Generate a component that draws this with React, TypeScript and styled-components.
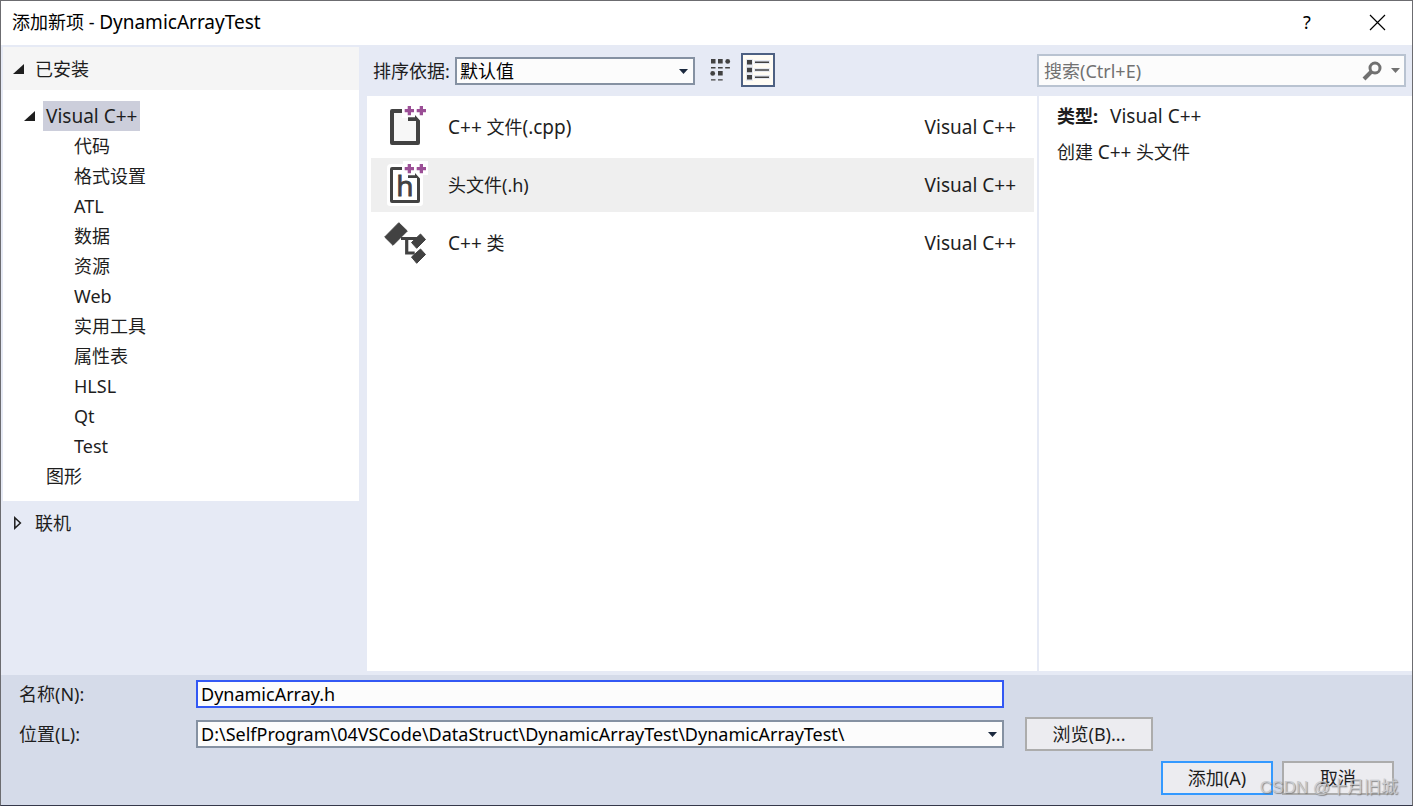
import React from 'react';
import styled, { createGlobalStyle } from 'styled-components';

const GlobalStyle = createGlobalStyle`
  *, *::before, *::after { box-sizing: border-box; }
  body {
    margin: 0;
    color: #1e1e1e;
    font: 18px/28px "Noto Sans", "Noto Sans CJK SC", sans-serif;
  }
  button, input, select { font: inherit; color: inherit; margin: 0; border-radius: 0; }
  button { padding: 0; border: 0; background: none; }
  ul { list-style: none; margin: 0; padding: 0; }
  svg { display: block; flex: none; }
`;

const Dialog = styled.div`
  position: relative;
  display: flex;
  flex-direction: column;
  min-height: 100vh;
  border: 1px solid #6c6c70;
  border-bottom-color: #35384a;
  background: #e6eaf5;
`;

const TitleBar = styled.header`
  display: flex;
  align-items: center;
  height: 44px;
  padding: 0 10px 2px 11px;
  background: #fff;
  color: #000;
`;

const Title = styled.h1`
  flex: 1;
  margin: 0;
  font-size: 18px;
  font-weight: 400;
`;

const Latin = styled.span`
  font-size: 19px;
`;

const CaptionButton = styled.button`
  display: flex;
  align-items: center;
  justify-content: center;
  width: 50px;
  height: 42px;
  & + & { margin-left: 20px; }
`;

const Body = styled.main`
  flex: 1;
  display: grid;
  grid-template-columns: 356px minmax(0, 1fr);
  column-gap: 8px;
  padding: 0 0 4px 2px;
`;

const Sidebar = styled.nav`
  padding-top: 2px;
`;

const SectionHeader = styled.button<{ $open?: boolean }>`
  display: flex;
  align-items: center;
  gap: 11px;
  width: 100%;
  height: 43px;
  padding-left: 10px;
  text-align: left;
  background: ${(p) => (p.$open ? '#f5f5f5' : 'transparent')};
`;

const Tree = styled.ul`
  padding: 11px 0 10px 21px;
  background: #fff;
`;

const TreeRow = styled.li<{ $depth: number }>`
  display: flex;
  align-items: center;
  gap: 8px;
  height: 30px;
  padding-left: ${(p) => p.$depth}px;
`;

const TreeButton = styled.button<{ $selected?: boolean }>`
  height: 30px;
  padding: 0 3px;
  background: ${(p) => (p.$selected ? '#cccedb' : 'transparent')};
`;

const Content = styled.section`
  display: flex;
  flex-direction: column;
  min-width: 0;
`;

const Toolbar = styled.div`
  display: flex;
  align-items: center;
  height: 51px;
  padding: 0 6px;
`;

const SortLabel = styled.label`
  width: 82px;
  white-space: nowrap;
`;

const ComboWrap = styled.div<{ $width: string }>`
  position: relative;
  width: ${(p) => p.$width};
`;

const Combo = styled.select`
  display: block;
  width: 100%;
  height: 28px;
  padding: 0 24px 0 3px;
  border: 2px solid #8591a2;
  background: #fcfcfc;
  color: #000;
  line-height: 24px;
  appearance: none;
  outline: none;
`;

const ComboArrow = styled.svg`
  position: absolute;
  right: 7px;
  top: 12px;
  pointer-events: none;
`;

const ViewButtons = styled.div`
  display: flex;
  gap: 4px;
  height: 35px;
  margin-left: 8px;
`;

const ViewButton = styled.button<{ $active?: boolean }>`
  display: flex;
  align-items: center;
  justify-content: center;
  width: 34px;
  height: 34px;
  border: 2px solid ${(p) => (p.$active ? '#4d6082' : 'transparent')};
  background: ${(p) => (p.$active ? '#fffcf4' : 'transparent')};
`;

const SearchBox = styled.div`
  display: flex;
  align-items: center;
  width: 369px;
  height: 33px;
  margin-left: auto;
  padding-right: 4px;
  border: 2px solid #b9c3d1;
  background: #fcfcfc;
`;

const SearchInput = styled.input`
  flex: 1;
  min-width: 0;
  height: 29px;
  padding: 0 5px;
  border: 0;
  background: none;
  outline: none;
  &::placeholder { color: #717171; opacity: 1; }
`;

const SearchButton = styled.button`
  padding: 0 0 0 8px;
`;

const Panels = styled.div`
  flex: 1;
  display: grid;
  grid-template-columns: minmax(0, 1fr) 373px;
  column-gap: 2px;
`;

const TemplateList = styled.ul`
  display: flex;
  flex-direction: column;
  gap: 4px;
  padding: 4px 3px 4px 4px;
  background: #fff;
`;

const TemplateItem = styled.button<{ $selected?: boolean }>`
  display: flex;
  align-items: center;
  gap: 20px;
  width: 100%;
  height: 54px;
  padding: 0 18px 0 13px;
  text-align: left;
  background: ${(p) => (p.$selected ? '#efefef' : 'transparent')};
`;

const TemplateName = styled.span`
  flex: 1;
`;

const Details = styled.aside`
  display: flex;
  flex-direction: column;
  gap: 8px;
  padding: 6px 18px;
  background: #fff;
`;

const DetailLine = styled.p`
  height: 28px;
  margin: 0;
`;

const DetailKey = styled.b`
  margin-right: 12px;
`;

const Footer = styled.footer`
  padding: 5px 18px 10px;
  background: #d5dbe9;
`;

const Fields = styled.div`
  display: grid;
  grid-template-columns: 177px minmax(0, 1fr) 128px;
  grid-template-rows: 28px 34px;
  row-gap: 9px;
  align-items: center;
  padding-right: 241px;
`;

const NameInput = styled.input`
  display: block;
  width: 100%;
  height: 28px;
  padding: 0 3px;
  border: 2px solid #3358f4;
  background: #fcfcfc;
  color: #000;
  outline: none;
`;

const PushButton = styled.button<{ $primary?: boolean }>`
  width: 112px;
  height: 34px;
  border: 2px solid ${(p) => (p.$primary ? '#3399ff' : '#acacac')};
  background: #ececf0;
`;

const BrowseButton = styled(PushButton)`
  grid-column: 3;
  width: 128px;
`;

const Field = styled.div`
  padding-right: 21px;
`;

const Actions = styled.div`
  display: flex;
  justify-content: flex-end;
  gap: 9px;
  margin-top: 10px;
`;

const Watermark = styled.span`
  position: absolute;
  right: 14px;
  bottom: 3px;
  color: #c4c6ca;
  font-family: "Liberation Sans", "Noto Sans CJK SC", sans-serif;
  font-size: 17px;
  text-shadow: 1px 1px 1px #777;
  opacity: 0.85;
  pointer-events: none;
`;

const ExpandedMark = () => (
  <svg width="11" height="10" viewBox="0 0 11 10">
    <path d="M11 0v10H0z" fill="#1e1e1e" />
  </svg>
);

const CollapsedMark = () => (
  <svg width="11" height="14" viewBox="0 0 11 14">
    <path d="M1.8 1.8v10.4L7.4 7z" fill="none" stroke="#1e1e1e" strokeWidth="1.5" />
  </svg>
);

const DownArrow = () => (
  <ComboArrow width="9" height="5" viewBox="0 0 9 5">
    <path d="M0 0h9L4.500 5z" fill="#1b293e" />
  </ComboArrow>
);

const Pluses = () => (
  <path
    d="M23.700 1h3.300v3h3v3.300h-3v3h-3.300v-3h-3V4h3zM35.700 1h3.300v3h3v3.300h-3v3h-3.300v-3h-3V4h3z"
    fill="#9b4f96"
  />
);

const CppFileIcon = () => (
  <svg width="44" height="44" viewBox="0 0 44 44">
    <path d="M8 6h10v7h16v25H8z" fill="#f7f7f7" />
    <path
      d="M18 4H8a2 2 0 0 0-2 2v32a2 2 0 0 0 2 2h26a2 2 0 0 0 2-2V15.500L31 10v2.200h-7V16h8v20H10V8h8z"
      fill="#424242"
    />
    <Pluses />
  </svg>
);

const HeaderFileIcon = () => (
  <svg width="44" height="44" viewBox="0 0 44 44" overflow="visible">
    <path
      d="M7 1h12V-2h25v14h-5v28a3 3 0 0 1-3 3H6a3 3 0 0 1-3-3V5a4 4 0 0 1 4-4z"
      fill="#fff"
    />
    <path
      d="M18 4H8a2 2 0 0 0-2 2v32a2 2 0 0 0 2 2h26a2 2 0 0 0 2-2V15.500L31 10v2.200h-7V15h9v22H9V7h9z"
      fill="#424242"
    />
    <text
      x="21"
      y="33"
      textAnchor="middle"
      fontFamily="Noto Sans, sans-serif"
      fontSize="28"
      fill="#424242"
      stroke="#424242"
      strokeWidth="0.8"
    >
      h
    </text>
    <Pluses />
  </svg>
);

const ClassIcon = () => (
  <svg width="44" height="44" viewBox="0 0 44 44">
    <g fill="#424242" stroke="#424242" strokeWidth="1" strokeLinejoin="round">
      <path d="M.7 16 14.800 1.700 23.300 10 9 24.300z" />
      <path d="M27.500 21.500 36.500 13l5 5.500-8.800 8.800z" />
      <path d="M27.500 36 36.500 28l5 5.500-8.800 8.800z" />
    </g>
    <path d="M17 17.500h17M22.700 17.500v14.500h8" fill="none" stroke="#424242" strokeWidth="3.200" />
  </svg>
);

const GridIcon = () => (
  <svg width="22" height="22" viewBox="0 0 22 22">
    <g fill="#424242">
      <path d="M2 0h4.500v4.500H2zM9 0h4.700v4.500H9zM9 12h4.700v4.500H9z" />
      <circle cx="18.700" cy="2.400" r="2.400" />
      <circle cx="3.700" cy="14.400" r="2.400" />
      <path d="M2 8h4.500v1.400H2zM9 8h4.700v1.400H9zM16.200 8h4.700v1.400h-4.700zM2 20.200h4.500v1.400H2zM9 20.200h4.700v1.400H9z" />
    </g>
  </svg>
);

const ListIcon = () => (
  <svg width="24" height="22" viewBox="0 0 24 22">
    <path d="M0 0h7v22H0zM8 1h16v4H8zM8 9h16v4H8zM8 16h16v4H8z" fill="#e6e9f0" />
    <path
      d="M1 1h5v4.500H1zM1 8.700h5v4.500H1zM1 16h5v4.500H1zM9 2.500h14v1.500H9zM9 10.200h14v1.500H9zM9 17.500h14v1.500H9z"
      fill="#424242"
    />
  </svg>
);

const categories = ['代码', '格式设置', 'ATL', '数据', '资源', 'Web', '实用工具', '属性表', 'HLSL', 'Qt', 'Test'];

const templates = [
  { id: 'cpp', name: <><Latin>C++</Latin> 文件<Latin>(.cpp)</Latin></>, Icon: CppFileIcon },
  { id: 'h', name: <>头文件(.h)</>, Icon: HeaderFileIcon },
  { id: 'class', name: <><Latin>C++</Latin> 类</>, Icon: ClassIcon },
];

export default function App() {
  const [selected, setSelected] = React.useState(1);
  return (
    <>
      <GlobalStyle />
      <Dialog>
        <TitleBar>
          <Title>
            添加新项 - <Latin>DynamicArrayTest</Latin>
          </Title>
          <CaptionButton>?</CaptionButton>
          <CaptionButton aria-label="关闭">
            <svg width="17" height="17" viewBox="0 0 17 17">
              <path d="M1 1l15 15M16 1L1 16" stroke="#000" strokeWidth="1.200" />
            </svg>
          </CaptionButton>
        </TitleBar>

        <Body>
          <Sidebar>
            <SectionHeader $open>
              <ExpandedMark />
              已安装
            </SectionHeader>
            <Tree>
              <TreeRow $depth={0}>
                <ExpandedMark />
                <TreeButton $selected>
                  <Latin>Visual C++</Latin>
                </TreeButton>
              </TreeRow>
              {categories.map((name) => (
                <TreeRow key={name} $depth={47}>
                  <TreeButton>{name}</TreeButton>
                </TreeRow>
              ))}
              <TreeRow $depth={19}>
                <TreeButton>图形</TreeButton>
              </TreeRow>
            </Tree>
            <SectionHeader>
              <CollapsedMark />
              联机
            </SectionHeader>
          </Sidebar>

          <Content>
            <Toolbar>
              <SortLabel htmlFor="sort">排序依据:</SortLabel>
              <ComboWrap $width="240px">
                <Combo id="sort">
                  <option>默认值</option>
                </Combo>
                <DownArrow />
              </ComboWrap>
              <ViewButtons>
                <ViewButton aria-label="小图标">
                  <GridIcon />
                </ViewButton>
                <ViewButton $active aria-label="列表">
                  <ListIcon />
                </ViewButton>
              </ViewButtons>
              <SearchBox>
                <SearchInput type="text" aria-label="搜索" placeholder="搜索(Ctrl+E)" />
                <SearchButton aria-label="开始搜索">
                  <svg width="21" height="20" viewBox="0 0 21 20">
                    <circle cx="13" cy="7" r="5" fill="none" stroke="#717171" strokeWidth="3" />
                    <path d="M9.500 10.500 2 18" stroke="#717171" strokeWidth="4" />
                  </svg>
                </SearchButton>
                <SearchButton aria-label="搜索选项">
                  <svg width="9" height="5" viewBox="0 0 9 5">
                    <path d="M0 0h9L4.500 5z" fill="#717171" />
                  </svg>
                </SearchButton>
              </SearchBox>
            </Toolbar>
            <Panels>
              <TemplateList>
                {templates.map(({ id, name, Icon }, i) => (
                  <li key={id}>
                    <TemplateItem $selected={i === selected} onClick={() => setSelected(i)}>
                      <Icon />
                      <TemplateName>{name}</TemplateName>
                      <Latin>Visual C++</Latin>
                    </TemplateItem>
                  </li>
                ))}
              </TemplateList>
              <Details>
                <DetailLine>
                  <DetailKey>类型:</DetailKey>
                  <Latin>Visual C++</Latin>
                </DetailLine>
                <DetailLine>
                  创建 <Latin>C++</Latin> 头文件
                </DetailLine>
              </Details>
            </Panels>
          </Content>
        </Body>

        <Footer>
          <Fields>
            <label htmlFor="name">名称(N):</label>
            <Field>
              <NameInput id="name" type="text" defaultValue="DynamicArray.h" />
            </Field>
            <span />
            <label htmlFor="location">位置(L):</label>
            <Field>
              <ComboWrap $width="100%">
                <Combo id="location">
                  <option>{'D:\\SelfProgram\\04VSCode\\DataStruct\\DynamicArrayTest\\DynamicArrayTest\\'}</option>
                </Combo>
                <DownArrow />
              </ComboWrap>
            </Field>
            <BrowseButton>浏览(B)...</BrowseButton>
          </Fields>
          <Actions>
            <PushButton $primary>添加(A)</PushButton>
            <PushButton>取消</PushButton>
          </Actions>
        </Footer>
        <Watermark>CSDN @十月旧城</Watermark>
      </Dialog>
    </>
  );
}
